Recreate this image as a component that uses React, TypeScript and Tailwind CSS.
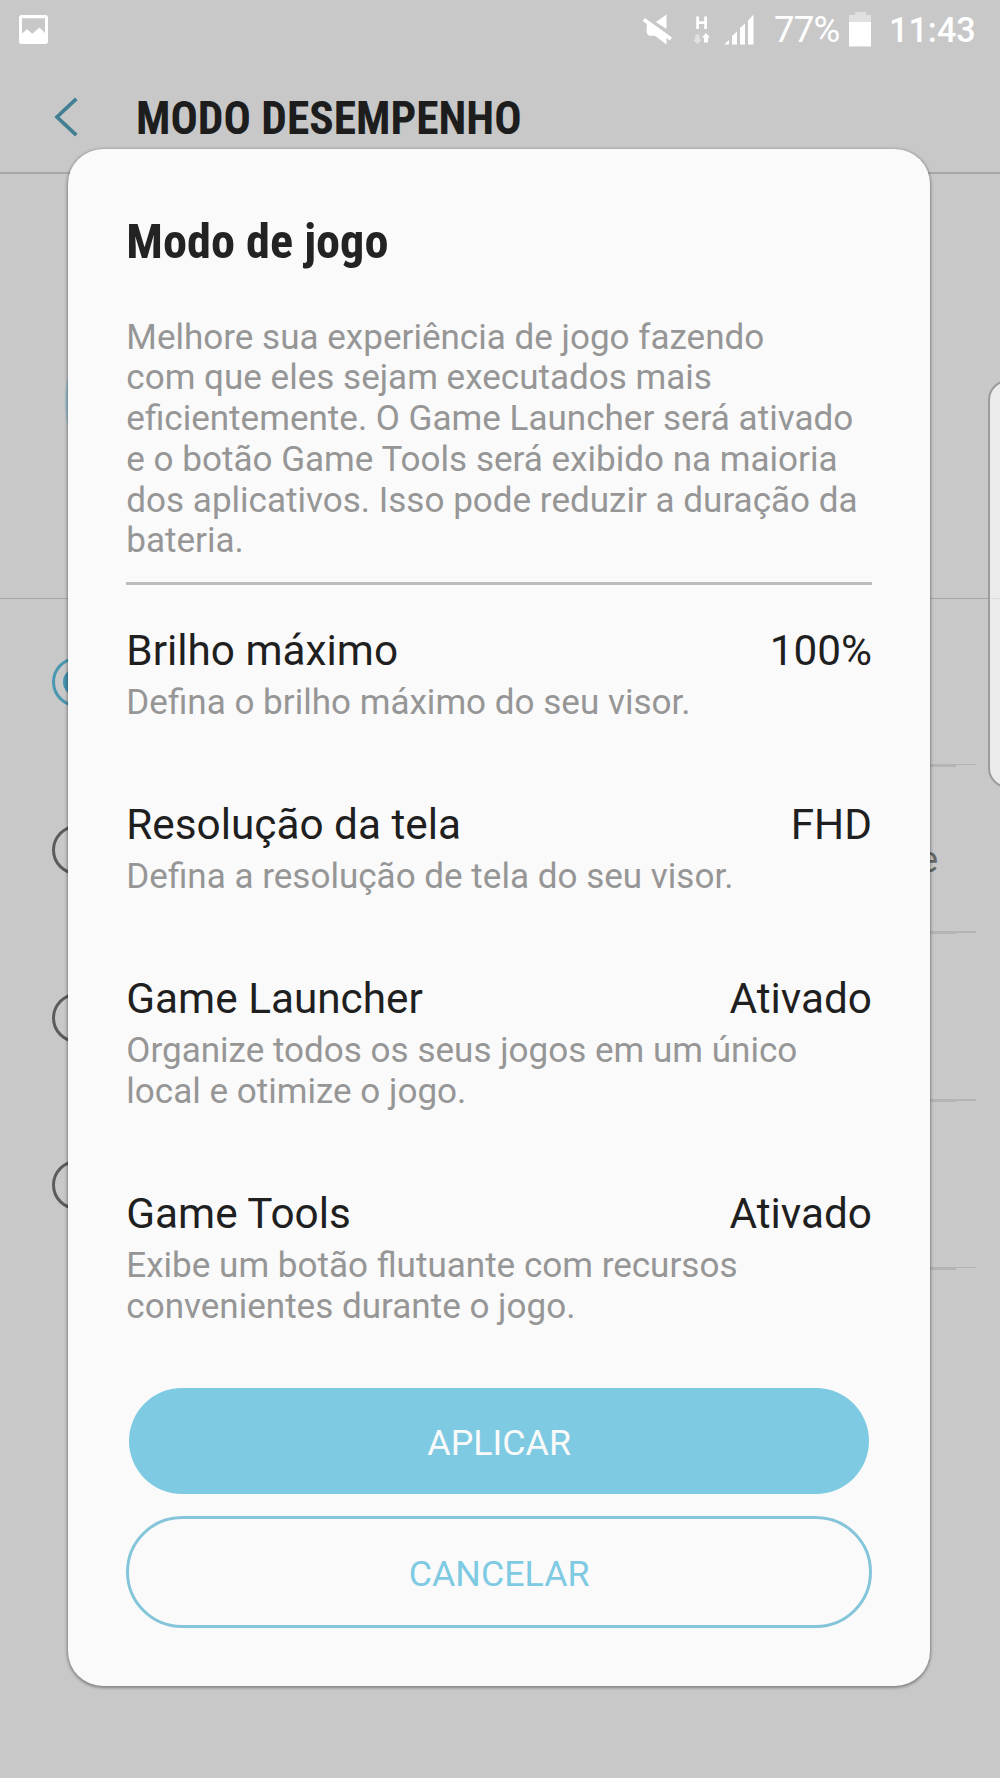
import React from 'react';

interface Setting {
  title: string;
  value: string;
  description: React.ReactNode;
}

const settings: Setting[] = [
  { title: 'Brilho máximo', value: '100%', description: 'Defina o brilho máximo do seu visor.' },
  { title: 'Resolução da tela', value: 'FHD', description: 'Defina a resolução de tela do seu visor.' },
  {
    title: 'Game Launcher',
    value: 'Ativado',
    description: <>Organize todos os seus jogos em um único<br />local e otimize o jogo.</>,
  },
  {
    title: 'Game Tools',
    value: 'Ativado',
    description: <>Exibe um botão flutuante com recursos<br />convenientes durante o jogo.</>,
  },
];

const modes = [
  { id: 'optimized', selected: true, text: '' },
  { id: 'game', selected: false, text: 'e' },
  { id: 'entertainment', selected: false, text: '' },
  { id: 'performance', selected: false, text: '' },
];

function StatusBar() {
  return (
    <div className="flex h-[58px] items-center pl-[19px] pr-[24px] text-white">
      <svg className="h-[29px] w-[29px]" viewBox="0 0 29 29">
        <path fill="currentColor" fillRule="evenodd" d="M2.5 0h24A2.5 2.5 0 0 1 29 2.500v24a2.500 2.500 0 0 1-2.500 2.500h-24A2.500 2.500 0 0 1 0 26.500v-24A2.500 2.500 0 0 1 2.500 0ZM3 3.200v15.300l5-4.300 5.300 4.600 7.200-6.400 5.500 5.700V3.200Z" />
      </svg>

      <svg className="ml-auto h-[31px] w-[29px]" viewBox="0 0 29 31">
        <path fill="currentColor" d="M23.500.500v14.500L12.800 8ZM4 9l19.500 13v8.500L12 21.800H6.500Q3.500 20.500 3.500 16.500Z" />
        <path stroke="currentColor" strokeWidth="3.700" d="M.800 5.500 28 25" />
      </svg>
      <svg className="ml-[21px] h-[31px] w-[17px]" viewBox="0 0 17 31">
        <path stroke="currentColor" strokeWidth="2.800" d="M4.600 2.500v12.500M12.600 2.500v12.500M4.600 8.600h8" />
        <path fill="#e0e0e0" d="M2.200 20.500h4.300v5H9L4.500 30.500 0 25.500h2.200Z" />
        <path fill="currentColor" d="m13 19 4 4.600h-2v5h-4v-5H8.800Z" />
      </svg>
      <svg className="ml-[14px] h-[31px] w-[30px]" viewBox="0 0 30 31">
        <path fill="currentColor" d="M0 30.500 5 26v4.500ZM8 30.500V22l5-4.500v13ZM16 30.500V14l5-4.500v21ZM24 30.500V6.500L29.500.500v30Z" />
      </svg>
      <span className="ml-[20px] mt-[3px] w-[68px] text-[36.500px] leading-none tracking-[-0.800px]">77%</span>
      <svg className="ml-[7px] h-[36px] w-[22px]" viewBox="0 0 22 36">
        <path fill="#e0e0e0" d="M6 1h11v3h5v7H0V4h6Z" />
        <path fill="currentColor" d="M0 11h22v24.500H0Z" />
      </svg>
      <span className="ml-[18px] mt-[3px] w-[87px] text-[34.200px] font-medium leading-none">11:43</span>
    </div>
  );
}

function Background() {
  return (
    <div className="flex h-full flex-col">
      <StatusBar />
      <header className="flex h-[114px] items-center pl-[54px] pt-[3px]">
        <svg className="h-[40px] w-[24px]" viewBox="0 0 24 40" fill="none">
          <path stroke="#437f93" strokeWidth="3.700" d="M22.300 1.800 3 20l19.300 18.200" />
        </svg>
        <h1 className="ml-[58px] mt-[5px] font-['Roboto_Condensed',Roboto,sans-serif] text-[45.400px] font-bold leading-none text-[#1d1d1d]">
          MODO DESEMPENHO
        </h1>
      </header>
      <div className="flex h-[427px] items-center border-b border-t-2 border-b-[#a6a6a6] border-t-[#a6a6a6] pl-[64.500px]">
        <div className="mt-[36px] h-[220px] w-[220px] -translate-y-[2px] rounded-full border-4 border-[#9dbfca]" />
      </div>
      {modes.map(mode => (
        <div key={mode.id} className="flex h-[167.7px] shrink-0 flex-col">
          <div className="flex flex-1 items-center pl-[52px] pr-[62px] pt-[2px]">
            <div
              className={
                mode.selected
                  ? 'flex h-[50px] w-[50px] items-center justify-center rounded-full border-[3px] border-[#4a97b2]'
                  : 'h-[50px] w-[50px] rounded-full border-[3px] border-[#5c5c5c]'
              }
            >
              {mode.selected && <div className="h-[28px] w-[28px] shrink-0 rounded-full bg-[#4493b0]" />}
            </div>
            <span className="ml-auto mt-[20px] text-[36px] leading-none text-[#666866]">{mode.text}</span>
          </div>
          <div className="ml-[126px] mr-[24px] h-[1.500px] bg-[#b4b4b4]" />
          <div className="ml-[126px] mr-[44px] h-[1.500px] bg-[#b4b4b4]" />
        </div>
      ))}
    </div>
  );
}

function SettingRow({ title, value, description }: Setting) {
  return (
    <div>
      <div className="flex justify-between text-[42.300px] leading-[48px] text-[#1f1f1f]">
        <span>{title}</span>
        <span>{value}</span>
      </div>
      <p className="mt-[7.600px] whitespace-nowrap text-[35.050px] leading-[40.750px] text-[#969696]">{description}</p>
    </div>
  );
}

export default function App() {
  return (
    <div className="relative h-[1778px] w-[1000px] overflow-hidden bg-[#c8c8c8] font-[Roboto,sans-serif]">
      <Background />

      {/* Edge panel handle */}
      <div className="absolute left-[988px] top-[380px] h-[408px] w-[40px] rounded-[20px] border-2 border-[#9c9c9c] bg-[#ebebeb]">
        <div className="mt-[216px] h-px bg-[#dcdcdc]" />
      </div>

      {/* Dialog */}
      <div className="absolute left-[68px] top-[149px] flex h-[1537px] w-[862px] flex-col rounded-[35px] bg-[#fafafa] pl-[58.300px] pr-[58px] pt-[65px] shadow-[0_1px_3px_1px_rgba(0,0,0,0.350)]">
        <h2 className="font-['Roboto_Condensed',Roboto,sans-serif] text-[48.300px] font-bold leading-[56px] text-[#232323]">
          Modo de jogo
        </h2>
        <p className="mt-[46.600px] whitespace-nowrap text-[35.050px] leading-[40.750px] text-[#969696]">
          Melhore sua experiência de jogo fazendo<br />
          com que eles sejam executados mais<br />
          eficientemente. O Game Launcher será ativado<br />
          e o botão Game Tools será exibido na maioria<br />
          dos aplicativos. Isso pode reduzir a duração da<br />
          bateria.
        </p>
        <div className="mt-[20.900px] h-[3px] shrink-0 bg-[#bdbdbd]" />
        <div className="mt-[41.600px] flex flex-col gap-[77.800px]">
          {settings.map(setting => (
            <SettingRow key={setting.title} {...setting} />
          ))}
        </div>
        <div className="mb-[58px] mt-auto flex flex-col gap-[22px]">
          <button className="mx-[2.700px] h-[106px] rounded-full bg-[#7ecae2] pt-[5px] text-[35.800px] text-[#fafafa]">APLICAR</button>
          <button className="h-[112px] rounded-full border-[3px] border-[#84c5da] pt-[5px] text-[35.800px] text-[#7ecae2]">CANCELAR</button>
        </div>
      </div>
    </div>
  );
}
